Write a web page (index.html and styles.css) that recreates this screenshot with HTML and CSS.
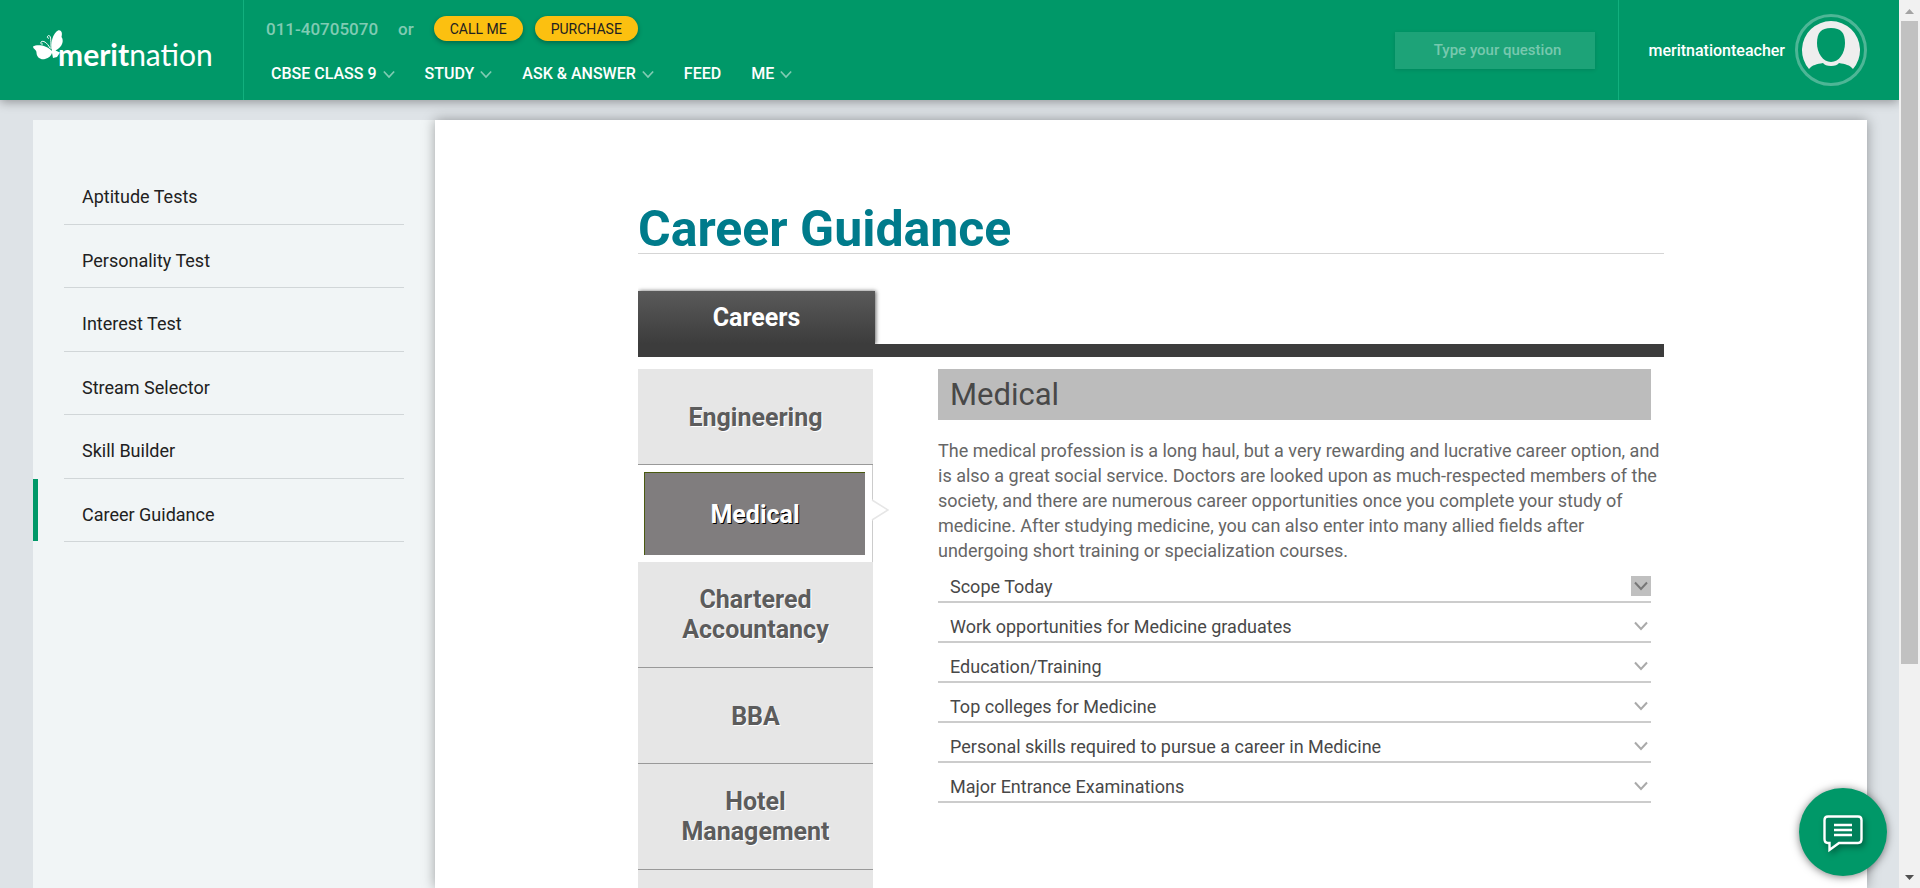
FILE: index.html
```html
<!DOCTYPE html>
<html lang="en">
<head>
<meta charset="utf-8">
<title>Career Guidance - Meritnation</title>
<link rel="stylesheet" href="styles.css">
</head>
<body>
<svg class="sprite" aria-hidden="true">
  <symbol id="chevron" viewBox="0 0 14 10"><path d="M1 1.5l6 6.500 6-6.500" fill="none" stroke="currentColor" stroke-width="2"/></symbol>
</svg>
<div class="app">
  <header class="header">
    <a class="logo" href="#" aria-label="meritnation">
      <svg class="butterfly" viewBox="0 0 31 31" fill="#fff" aria-hidden="true">
        <path d="M19 22C17 14 20 4 25 1.500C29 0.500 29.500 5 28.500 8C31 11 30 18 22.500 21.500L27 23.500L24 28L20 29L19 24C18 27 16 29 12 30C8 31 4 29 3.500 24C4 21 0 20 0 17.500C4 15 14 16 19 22Z"/>
        <path d="M18 20C18 12 18 6 15.500 6.500C13.500 7.500 14.500 10 16 9M17 19C14 13.500 10 11 8 13C7.500 15 9 16 10 14.500" fill="none" stroke="#fff" stroke-width="1"/>
      </svg>
      <span class="wordmark"><b>merit</b>nation</span>
    </a>
    <div class="header-main">
      <div class="contact">
        <span>011-40705070</span>
        <span>or</span>
        <div class="pills">
          <button class="pill" type="button">CALL ME</button>
          <button class="pill" type="button">PURCHASE</button>
        </div>
      </div>
      <nav class="menu">
        <a href="#">CBSE CLASS 9 <svg class="chev"><use href="#chevron"/></svg></a>
        <a href="#">STUDY <svg class="chev"><use href="#chevron"/></svg></a>
        <a href="#">ASK &amp; ANSWER <svg class="chev"><use href="#chevron"/></svg></a>
        <a href="#">FEED</a>
        <a href="#">ME <svg class="chev"><use href="#chevron"/></svg></a>
      </nav>
    </div>
    <input class="question" type="text" placeholder="Type your question" aria-label="Type your question">
    <a class="user" href="#">
      <span>meritnationteacher</span>
      <svg class="avatar" viewBox="0 0 72 72" aria-hidden="true">
        <circle cx="36" cy="36" r="34.500" fill="none" stroke="#4db696" stroke-width="3"/>
        <path d="M14 55A29 29 0 1 1 58 55C55 51 50 50 44 49Q42 52 36 52Q30 52 28 49C22 50 17 51 14 55Z" fill="#eee"/>
        <path d="M36 14C46 14 50 19 50 29C50 39 44 48 36 48S22 39 22 29C22 19 26 14 36 14Z" fill="#009868"/>
      </svg>
    </a>
  </header>
  <div class="page">
    <aside class="sidebar">
      <ul>
        <li><a href="#">Aptitude Tests</a></li>
        <li><a href="#">Personality Test</a></li>
        <li><a href="#">Interest Test</a></li>
        <li><a href="#">Stream Selector</a></li>
        <li><a href="#">Skill Builder</a></li>
        <li class="current"><a href="#">Career Guidance</a></li>
      </ul>
    </aside>
    <main class="content">
      <div class="inner">
        <h1>Career Guidance</h1>
        <div class="tabs"><button class="tab" type="button">Careers</button></div>
        <div class="careers">
          <ul class="career-list">
            <li><a href="#">Engineering</a></li>
            <li class="selected"><a href="#">Medical</a>
              <svg class="pointer" viewBox="0 0 18 22" aria-hidden="true"><path d="M0 1V21H1L17 11L1 1Z" fill="#fff"/><path d="M1 1L17 11L1 21" fill="none" stroke="#e6e6e6" stroke-width="1.500"/></svg>
            </li>
            <li class="double"><a href="#">Chartered Accountancy</a></li>
            <li><a href="#">BBA</a></li>
            <li class="double"><a href="#">Hotel Management</a></li>
            <li></li>
          </ul>
          <section class="detail">
            <h2>Medical</h2>
            <p>The medical profession is a long haul, but a very rewarding and lucrative career option, and is also a great social service. Doctors are looked upon as much-respected members of the society, and there are numerous career opportunities once you complete your study of medicine. After studying medicine, you can also enter into many allied fields after undergoing short training or specialization courses.</p>
            <div class="accordion">
              <button class="row open" type="button">Scope Today <span class="toggle"><svg><use href="#chevron"/></svg></span></button>
              <button class="row" type="button">Work opportunities for Medicine graduates <span class="toggle"><svg><use href="#chevron"/></svg></span></button>
              <button class="row" type="button">Education/Training <span class="toggle"><svg><use href="#chevron"/></svg></span></button>
              <button class="row" type="button">Top colleges for Medicine <span class="toggle"><svg><use href="#chevron"/></svg></span></button>
              <button class="row" type="button">Personal skills required to pursue a career in Medicine <span class="toggle"><svg><use href="#chevron"/></svg></span></button>
              <button class="row" type="button">Major Entrance Examinations <span class="toggle"><svg><use href="#chevron"/></svg></span></button>
            </div>
          </section>
        </div>
      </div>
    </main>
  </div>
</div>
<div class="scrollbar" aria-hidden="true">
  <svg viewBox="0 0 21 21"><path d="M6 14L10.500 9L15 14Z" fill="#a3a3a3"/></svg>
  <div class="track"><div class="thumb"></div></div>
  <svg viewBox="0 0 21 21"><path d="M6 8L10.500 13L15 8Z" fill="#505050"/></svg>
</div>
<button class="chat" type="button" aria-label="Chat">
  <svg viewBox="0 0 40 38" fill="none" stroke="#fff" stroke-width="2.400" aria-hidden="true">
    <path d="M5 1.500H35Q38.500 1.500 38.500 5V24Q38.500 28 35 28H16L6.500 35V28H5Q1.500 28 1.500 24V5Q1.500 1.500 5 1.500Z" fill="#00805a"/>
    <path d="M11 10H29M11 15H29M11 20H29"/>
  </svg>
</button>
</body>
</html>
```
FILE: styles.css
```css
* { box-sizing: border-box; }
body {
  margin: 0;
  height: 100vh;
  display: flex;
  overflow: hidden;
  background: #dee3e7;
  color: #212121;
  font-family: Roboto, "Open Sans", sans-serif;
  font-size: 18px;
}
a { color: inherit; text-decoration: none; }
ul { list-style: none; margin: 0; padding: 0; }
button { font: inherit; border: 0; cursor: pointer; }
.sprite { position: absolute; width: 0; height: 0; }
.app { flex: 1; min-width: 0; display: flex; flex-direction: column; overflow: hidden; }

.header {
  flex: none;
  position: relative;
  z-index: 2;
  height: 100px;
  display: flex;
  align-items: center;
  background: #009868;
  color: #fff;
  box-shadow: 0 2px 10px rgba(0, 0, 0, .35);
}
.logo {
  width: 244px;
  height: 100%;
  padding: 29px 0 0 33px;
  border-right: 1px solid #12b07e;
  display: flex;
  align-items: flex-start;
}
.butterfly { width: 31px; height: 31px; flex: none; margin-right: -6px; }
.wordmark { font-family: Lato, "Open Sans", sans-serif; font-size: 30px; line-height: 50px; }
.header-main { flex: 1; height: 100%; padding: 16px 0 0 22px; }
.contact { display: flex; gap: 20px; align-items: center; height: 25px; color: #80cbb3; font-size: 17px; font-weight: 500; }
.pills { display: flex; gap: 12px; }
.pill {
  height: 25px;
  padding: 0 16px;
  border-radius: 13px;
  background: #fcc010;
  color: #212121;
  font-size: 14px;
  font-weight: 400;
  box-shadow: 0 2px 5px rgba(0, 0, 0, .3);
}
.menu { display: flex; gap: 30px; padding: 21px 0 0 5px; font-size: 16px; font-weight: 500; line-height: 24px; }
.menu a { display: flex; align-items: center; gap: 6px; }
.chev { width: 12px; height: 9px; color: #80cbb3; }
.question {
  width: 200px;
  height: 37px;
  border: 0;
  margin-right: 23px;
  padding: 0 0 0 6px;
  background: #1da378;
  color: #fff;
  text-align: center;
  font: 500 15px Roboto, sans-serif;
  box-shadow: 0 1px 4px rgba(0, 0, 0, .12);
}
.question::placeholder { color: #77c8ae; opacity: 1; }
.user {
  height: 100%;
  display: flex;
  align-items: center;
  gap: 10px;
  padding: 0 32px 0 30px;
  border-left: 1px solid #12b07e;
  font-size: 16px;
  font-weight: 500;
}
.avatar { width: 72px; height: 72px; }

.page { flex: 1; min-height: 0; display: flex; padding: 20px 32px 0 33px; }
.sidebar { width: 402px; flex: none; padding: 41px 31px 0; background: #f1f5f6; }
.sidebar li { height: 64px; padding: 24px 18px 0; border-bottom: 1px solid #d1d6d8; line-height: 24px; }
.sidebar li:nth-child(even) { height: 63px; }
.sidebar .current { position: relative; }
.sidebar .current::before { content: ""; position: absolute; left: -31px; top: 0; bottom: 0; width: 5px; background: #009868; }
.content { flex: 1; min-width: 0; position: relative; background: #fff; box-shadow: 0 0 12px rgba(0, 0, 0, .35); }
.inner { max-width: 1026px; margin: 0 auto; padding-top: 85px; }
h1 { margin: 0; font-size: 50px; line-height: 48px; color: #007b8b; border-bottom: 1px solid #d5d5d5; }
.tabs { margin-top: 37px; border-bottom: 13px solid #3c3c3c; }
.tab {
  display: block;
  width: 237px;
  height: 53px;
  background: linear-gradient(#5a5a5a, #3c3c3c);
  color: #fff;
  font-size: 25px;
  font-weight: 700;
  box-shadow: 1px 0 4px rgba(0, 0, 0, .6);
  clip-path: inset(-6px -6px 0 0);
}
.careers { display: flex; align-items: flex-start; gap: 65px; margin-top: 12px; }
.career-list { width: 235px; flex: none; font-size: 25px; line-height: 30px; font-weight: 700; text-align: center; color: #5c5c5c; }
.career-list li { padding: 34px 30px 31px; background: #e6e6e6; border-bottom: 1px solid #999; text-shadow: 1px 1px 0 #fff; }
.career-list .double { padding: 23px 30px 22px; }
.career-list .selected { position: relative; padding: 7px 7px 7px 6px; background: #fff; border-right: 1px solid #ccc; border-bottom: 0; }
.selected a { display: block; padding: 27px 0 25px; background: #807d7e; border: solid #4a5a10; border-width: 1px 0 0 1px; color: #fff; text-shadow: 1px 1px 0 #000; }
.pointer { position: absolute; left: 233px; top: 34px; width: 18px; height: 22px; }
.detail { flex: 1; min-width: 0; margin-right: 13px; }
h2 { margin: 0; padding: 0 12px; background: #bcbcbc; color: #484848; font-size: 31px; font-weight: 400; line-height: 51px; }
.detail p { margin: 18px -10px 0 0; color: #666; line-height: 25px; }
.row {
  width: 100%;
  height: 40px;
  display: flex;
  align-items: center;
  justify-content: space-between;
  padding: 8px 0 0 12px;
  background: none;
  border-bottom: 2px solid #ccc;
  color: #484848;
  text-align: left;
}
.toggle { width: 20px; height: 20px; display: flex; align-items: center; justify-content: center; color: #aaa; }
.toggle svg { width: 14px; height: 10px; }
.open .toggle { background: #c0c0c0; color: #777; }

.scrollbar { width: 21px; flex: none; display: flex; flex-direction: column; background: #f1f1f1; }
.scrollbar svg { width: 21px; height: 21px; flex: none; }
.track { flex: 1; padding: 0 2px; }
.thumb { height: 76%; background: #c1c1c1; }
.chat {
  position: fixed;
  right: 33px;
  bottom: 12px;
  width: 88px;
  height: 88px;
  border-radius: 50%;
  background: #009868;
  box-shadow: 0 1px 8px rgba(0, 0, 0, .5);
  padding: 8px 0 0;
}
.chat svg { width: 40px; height: 38px; filter: drop-shadow(2px 3px 3px rgba(0, 0, 0, .35)); }
```
